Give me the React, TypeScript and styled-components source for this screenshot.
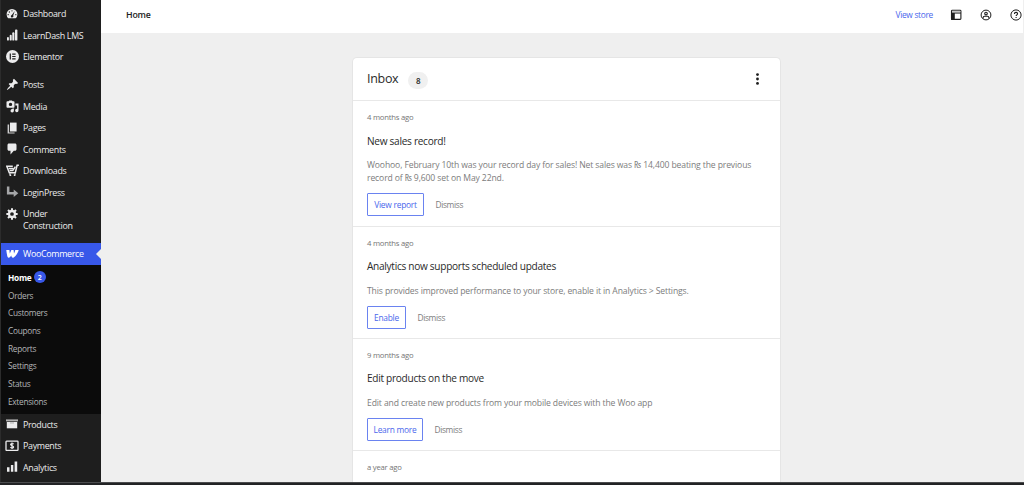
import React from 'react';
import styled, { createGlobalStyle } from 'styled-components';

const GlobalStyle = createGlobalStyle`
  *, *::before, *::after { box-sizing: border-box; }
  html, body { margin: 0; padding: 0; }
  body {
    font-family: "Open Sans", "Noto Sans", sans-serif;
    background: #efefef;
    overflow: hidden;
  }
  button, a { font-family: inherit; text-decoration: none; }
`;

const Page = styled.div`
  display: flex;
  flex-direction: column;
  height: 485px;
  width: 1024px;
  overflow: hidden;
`;

const Body = styled.div`
  flex: 1;
  min-height: 0;
  display: flex;
`;

const BottomEdge = styled.div`
  flex: none;
  height: 3px;
  background: #222325;
  border-top: 1px solid #4b4c4e;
`;

const Sidebar = styled.nav`
  flex: none;
  width: 101px;
  background: #1e1e1e;
  border-left: 1px solid #2c2c2c;
  padding-top: 3px;
  overflow: hidden;
`;

const MenuGroup = styled.div<{ $gap?: number }>`
  margin-bottom: ${(p) => p.$gap ?? 0}px;
`;

const MenuItem = styled.a<{ $active?: boolean; $tall?: boolean }>`
  position: relative;
  display: flex;
  align-items: flex-start;
  height: ${(p) => (p.$tall ? 33 : 21.55)}px;
  padding: 5px 0 0 4px;
  background: ${(p) => (p.$active ? '#3858e9' : 'transparent')};
  color: ${(p) => (p.$active ? '#fff' : '#ececed')};
`;

const MenuIcon = styled.span`
  flex: none;
  width: 14px;
  height: 12px;
  margin: -0.4px 4px 0 0;
  display: flex;
  align-items: center;
  justify-content: center;
  svg { display: block; flex: none; }
`;

const MenuLabel = styled.span`
  font-size: 8.9px;
  line-height: 11.5px;
  letter-spacing: -0.31px;
  white-space: pre-line;
`;

const ActiveArrow = styled.span`
  position: absolute;
  right: 0;
  top: 6px;
  border: 5px solid transparent;
  border-right-color: #efefef;
  border-left-width: 0;
`;

const SubMenu = styled.div`
  background: #0b0b0b;
  height: 149px;
  padding: 4px 0 0 7px;
`;

const SubItem = styled.a<{ $current?: boolean }>`
  display: flex;
  align-items: center;
  height: 17.7px;
  font-size: 8.3px;
  letter-spacing: -0.29px;
  font-weight: ${(p) => (p.$current ? 700 : 400)};
  color: ${(p) => (p.$current ? '#fff' : '#b4b5b7')};
`;

const Count = styled.span`
  width: 12px;
  height: 12px;
  margin-left: 2.2px;
  border-radius: 50%;
  background: #3858e9;
  color: #fff;
  font-size: 7px;
  font-weight: 600;
  display: flex;
  align-items: center;
  justify-content: center;
`;

const Main = styled.main`
  flex: 1;
  min-width: 0;
  display: flex;
  flex-direction: column;
`;

const TopBar = styled.header`
  flex: none;
  display: flex;
  align-items: center;
  height: 33px;
  margin-right: 1px;
  padding: 0 1px 4px 25px;
  background: #fff;
`;

const PageTitle = styled.h1`
  margin: 0;
  flex: 1;
  font-size: 8.8px;
  letter-spacing: -0.2px;
  font-weight: 600;
  color: #1e1e1e;
`;

const StoreLink = styled.a`
  font-size: 8.4px;
  letter-spacing: -0.31px;
  color: #4a67ec;
  margin-right: 17px;
`;

const TopIcons = styled.div`
  display: flex;
  align-items: center;
  gap: 18px;
  svg { display: block; }
`;

const Content = styled.div`
  flex: 1;
  min-height: 0;
  display: flex;
  justify-content: flex-start;
  padding: 24px 0 0 251px;
`;

const Card = styled.section`
  width: 429px;
  height: 460px;
  background: #fff;
  border: 1px solid #e5e5e5;
  border-bottom: 0;
  border-radius: 5px 5px 0 0;
`;

const CardHeader = styled.header`
  display: flex;
  align-items: center;
  height: 43px;
  padding: 0 17px 0 14px;
  border-bottom: 1px solid #e8e8e8;
`;

const CardTitle = styled.h2`
  margin: -1px 0 0;
  font-size: 12.5px;
  letter-spacing: -0.3px;
  font-weight: 400;
  color: #2a2a2a;
`;

const Badge = styled.span`
  width: 20px;
  height: 17px;
  margin: 2px auto 0 10px;
  border-radius: 9px;
  background: #f0f0f0;
  color: #1e1e1e;
  font-size: 8px;
  font-weight: 600;
  display: flex;
  align-items: center;
  justify-content: center;
`;

const Note = styled.article<{ $height: number }>`
  height: ${(p) => p.$height}px;
  padding: 9.4px 14px 0;
  border-bottom: 1px solid #e8e8e8;
`;

const NoteDate = styled.div`
  font-size: 7.7px;
  line-height: 14px;
  letter-spacing: -0.22px;
  color: #757575;
`;

const NoteTitle = styled.h3`
  margin: 8.2px 0 10.5px;
  font-size: 10.1px;
  line-height: 16px;
  font-weight: 400;
  letter-spacing: -0.29px;
  color: #2a2a2a;
`;

const NoteText = styled.p`
  margin: 0 0 8px;
  font-size: 8.6px;
  line-height: 13px;
  letter-spacing: -0.12px;
  color: #7c7c7c;
  white-space: pre-line;
`;

const Actions = styled.div`
  display: flex;
  align-items: center;
  gap: 11.5px;
`;

const PrimaryAction = styled.button<{ $width: number }>`
  width: ${(p) => p.$width}px;
  height: 23px;
  padding: 0;
  background: #fff;
  border: 1px solid #6a83f0;
  border-radius: 1px;
  color: #4a67ec;
  font-size: 8.4px;
  letter-spacing: -0.24px;
`;

const DismissAction = styled.button`
  padding: 0;
  border: 0;
  background: none;
  color: #7c7c7c;
  font-size: 8.4px;
  letter-spacing: -0.36px;
`;

const icons: Record<string, React.ReactNode> = {
  dashboard: (
    <svg width="12" height="12" viewBox="0 0 20 20" fill="currentColor">
      <path fillRule="evenodd" d="M3.8 17h12.4A9 9 0 1 0 3.8 17zM10 3.6a1.100 1.100 0 1 1 0 2.200 1.100 1.100 0 0 1 0-2.200zM5.600 5.600a1.100 1.100 0 1 1 0 2.200 1.100 1.100 0 0 1 0-2.200zM3.600 10a1.100 1.100 0 1 1 0 2.200 1.100 1.100 0 0 1 0-2.200zM16.400 10a1.100 1.100 0 1 1 0 2.200 1.100 1.100 0 0 1 0-2.200zM14.600 5.200 12 12.600a2.100 2.100 0 1 1-2.300-.9z" />
    </svg>
  ),
  bars: (
    <svg width="12" height="12" viewBox="0 0 12 12" fill="currentColor">
      <rect x="1" y="8" width="1.9" height="3.6" rx=".9" />
      <rect x="3.7" y="5.8" width="2" height="5.8" rx=".9" />
      <rect x="6.3" y="3.3" width="2.100" height="8.3" rx=".9" />
      <rect x="9" y=".6" width="2.4" height="11" rx=".9" />
    </svg>
  ),
  elementor: (
    <svg width="13" height="13" viewBox="0 0 13 13">
      <circle cx="6.5" cy="6.5" r="6.5" fill="currentColor" />
      <path d="M4.300 3.600v5.800M6.200 4.200h3.400M6.200 6.500h3.400M6.200 8.800h3.400" stroke="#1e1e1e" strokeWidth="1.200" />
    </svg>
  ),
  pin: (
    <svg width="13" height="13" viewBox="0 0 20 20" fill="currentColor">
      <path d="M10.440 3.020l1.820-1.820 6.360 6.350-1.830 1.820c-1.050-.68-2.480-.57-3.410.36l-.75.750c-.92.930-1.040 2.350-.35 3.410l-1.830 1.820-2.410-2.410-2.800 2.790c-.42.420-3.380 2.710-3.800 2.290s1.860-3.390 2.280-3.810l2.790-2.790L4.100 9.360l1.830-1.820c1.050.69 2.480.57 3.400-.36l.75-.75c.93-.92 1.050-2.350.36-3.410z" />
    </svg>
  ),
  media: (
    <svg width="13" height="13" viewBox="0 0 13 13" fill="currentColor">
      <path fillRule="evenodd" d="M1.300 1.300h1.200L3.300.4h2.600l.8.900h1c.5 0 .8.300.8.800v4.800c0 .5-.3.800-.8.800H1.300c-.5 0-.8-.3-.8-.8V2.100c0-.5.300-.8.8-.8zM4.500 2.700a1.700 1.700 0 1 0 0 3.400 1.700 1.700 0 0 0 0-3.400z" />
      <path d="M9.400 3.600h3.100v7a1.700 1.700 0 1 1-1.400-1.700V5.500H9.400zM6.400 8.400h1.500v2.400a1.700 1.700 0 1 1-1.500-1.700z" />
    </svg>
  ),
  pages: (
    <svg width="12" height="12" viewBox="0 0 12 12" fill="currentColor">
      <path d="M4 .6h6.600v8.900H4z" />
      <path d="M1.600 2.400h1.500v8h5.500v1.200h-7z" opacity=".85" />
    </svg>
  ),
  comment: (
    <svg width="12" height="12" viewBox="0 0 20 20" fill="currentColor">
      <path d="M5 1h10c1.500 0 2.500 1 2.500 2.500v7c0 1.500-1 2.500-2.500 2.500h-2l-5.500 6V13H5c-1.500 0-2.500-1-2.500-2.500v-7C2.500 2 3.500 1 5 1z" />
    </svg>
  ),
  cart: (
    <svg width="13" height="13" viewBox="0 0 13 13" fill="none" stroke="currentColor">
      <path d="M12.900 1.200h-1.800L9.300 8.700H3.300L.8 2.300h6" strokeWidth="1.500" />
      <path d="M2.600 4.400h4.600M3.600 6.600h3.200L9.400 2.700" strokeWidth="1.500" />
      <circle cx="4.400" cy="11.200" r=".9" fill="currentColor" stroke="none" />
      <circle cx="8.600" cy="11.200" r=".9" fill="currentColor" stroke="none" />
      <path d="M3.900 8.700v2.500M9 8.700v2.500" strokeWidth=".9" />
    </svg>
  ),
  loginpress: (
    <svg width="13" height="12" viewBox="0 0 13 12" fill="#a5a6a8">
      <path d="M.9.600h2.500v5.300h4.300V3.400L12.300 7.200 7.700 11V8.500H.9z" />
    </svg>
  ),
  gear: (
    <svg width="12" height="12" viewBox="0 0 20 20" fill="none" stroke="currentColor">
      <circle cx="10" cy="10" r="5" strokeWidth="3.800" />
      <path d="M10 .6v3.600M10 15.800v3.600M.6 10h3.600M15.800 10h3.600M3.350 3.350l2.500 2.500M14.150 14.150l2.500 2.500M3.350 16.650l2.500-2.500M14.150 5.850l2.500-2.500" strokeWidth="3.400" />
    </svg>
  ),
  woo: (
    <svg width="13" height="12" viewBox="0 0 13 12" fill="currentColor">
      <path d="M.3 2h3.100l.4 3.500L5.400 2h2.200l.4 3.400C8.600 4.300 9 3.200 9.300 2h3.400C11.800 5.200 10 7.900 7.700 9.400c-1.100.6-1.900.2-2.200-.8l-.2-1L4.100 9c-1 1.100-2.100 1-2.600-.3C.9 6.700.5 4.400.3 2z" />
    </svg>
  ),
  products: (
    <svg width="12" height="12" viewBox="0 0 12 12" fill="currentColor">
      <path d="M0 1.400h12v2H0z" opacity=".7" />
      <path d="M.8 4h10.400v6.300H.8z" />
      <path d="M4 4.500h4v.9H4z" fill="#aaa" />
    </svg>
  ),
  payments: (
    <svg width="14" height="12" viewBox="0 0 14 12" fill="none" stroke="currentColor">
      <rect x="1" y="1.200" width="12" height="9.200" rx=".6" strokeWidth="1.300" />
      <path d="M8.700 3.900c-.7-.5-3.100-.7-3.100.7 0 1.500 3 .8 3 2.300 0 1.300-2.400 1.200-3.300.5M7 2.500v6.400" strokeWidth="1.200" />
    </svg>
  ),
  analytics: (
    <svg width="12" height="12" viewBox="0 0 12 12" fill="currentColor">
      <path d="M1 6.300h2.500v4.400H1zM4.900 4h2.400v6.700H4.900zM8.600.5h2.600v10.200H8.600z" />
    </svg>
  ),
};

type Entry = { label: string; icon: string; tall?: boolean; active?: boolean };

const groupA: Entry[] = [
  { label: 'Dashboard', icon: 'dashboard' },
  { label: 'LearnDash LMS', icon: 'bars' },
  { label: 'Elementor', icon: 'elementor' },
];
const groupB: Entry[] = [
  { label: 'Posts', icon: 'pin' },
  { label: 'Media', icon: 'media' },
  { label: 'Pages', icon: 'pages' },
  { label: 'Comments', icon: 'comment' },
  { label: 'Downloads', icon: 'cart' },
  { label: 'LoginPress', icon: 'loginpress' },
  { label: 'Under\nConstruction', icon: 'gear', tall: true },
];
const groupC: Entry[] = [
  { label: 'Products', icon: 'products' },
  { label: 'Payments', icon: 'payments' },
  { label: 'Analytics', icon: 'analytics' },
];
const subItems = ['Orders', 'Customers', 'Coupons', 'Reports', 'Settings', 'Status', 'Extensions'];

function Menu({ items, gap }: { items: Entry[]; gap?: number }) {
  return (
    <MenuGroup $gap={gap}>
      {items.map((it) => (
        <MenuItem key={it.label} $tall={it.tall} $active={it.active}>
          <MenuIcon>{icons[it.icon]}</MenuIcon>
          <MenuLabel>{it.label}</MenuLabel>
          {it.active && <ActiveArrow />}
        </MenuItem>
      ))}
    </MenuGroup>
  );
}

const notes = [
  {
    date: '4 months ago',
    title: 'New sales record!',
    text: 'Woohoo, February 10th was your record day for sales! Net sales was ₨ 14,400 beating the previous\nrecord of ₨ 9,600 set on May 22nd.',
    action: 'View report',
    width: 57,
    height: 125.5,
  },
  {
    date: '4 months ago',
    title: 'Analytics now supports scheduled updates',
    text: 'This provides improved performance to your store, enable it in Analytics > Settings.',
    action: 'Enable',
    width: 39,
    height: 112.3,
  },
  {
    date: '9 months ago',
    title: 'Edit products on the move',
    text: 'Edit and create new products from your mobile devices with the Woo app',
    action: 'Learn more',
    width: 56,
    height: 112.2,
  },
];

export default function App() {
  return (
    <Page>
      <GlobalStyle />
      <Body>
        <Sidebar>
          <Menu items={groupA} gap={6.4} />
          <Menu items={groupB} gap={6.7} />
          <Menu items={[{ label: 'WooCommerce', icon: 'woo', active: true }]} />
          <SubMenu>
            <SubItem $current>
              Home <Count>2</Count>
            </SubItem>
            {subItems.map((s) => (
              <SubItem key={s}>{s}</SubItem>
            ))}
          </SubMenu>
          <Menu items={groupC} />
        </Sidebar>
        <Main>
          <TopBar>
            <PageTitle>Home</PageTitle>
            <StoreLink>View store</StoreLink>
            <TopIcons>
              <svg width="12" height="12" viewBox="0 0 12 12">
                <rect x="1.5" y="1.2" width="9.4" height="9.2" rx=".8" fill="none" stroke="#1e1e1e" strokeWidth="1.1" />
                <path d="M1.500 4h9.400" stroke="#1e1e1e" strokeWidth="1.100" />
                <path d="M1 4h3.800v6.900H1z" fill="#1e1e1e" />
                <path d="M2 1.900h8.400v1.300H2z" fill="#c4c4c4" />
              </svg>
              <svg width="12" height="12" viewBox="0 0 12 12" fill="none" stroke="#1e1e1e">
                <circle cx="6" cy="6" r="4.9" />
                <circle cx="6" cy="4.6" r="1.3" strokeWidth="1.1" />
                <path d="M3.100 9.400V8.800c0-1 .7-1.500 1.500-1.500h2.800c.8 0 1.500.5 1.500 1.500v.6" strokeWidth="1.100" />
              </svg>
              <svg width="12" height="12" viewBox="0 0 12 12" fill="none" stroke="#1e1e1e">
                <circle cx="6" cy="6" r="5.1" />
                <path d="M4.400 4.900c0-2.100 3.200-2 3.200-.1 0 1.100-1.500 1.100-1.500 2.300M6.100 7.900v1" strokeWidth="1.100" />
              </svg>
            </TopIcons>
          </TopBar>
          <Content>
            <Card>
              <CardHeader>
                <CardTitle>Inbox</CardTitle>
                <Badge>8</Badge>
                <svg width="10" height="14" viewBox="0 0 10 14" fill="#1e1e1e">
                  <circle cx="4.5" cy="2.6" r="1.4" />
                  <circle cx="4.5" cy="7" r="1.4" />
                  <circle cx="4.5" cy="11.4" r="1.4" />
                </svg>
              </CardHeader>
              {notes.map((n) => (
                <Note key={n.title} $height={n.height}>
                  <NoteDate>{n.date}</NoteDate>
                  <NoteTitle>{n.title}</NoteTitle>
                  <NoteText>{n.text}</NoteText>
                  <Actions>
                    <PrimaryAction $width={n.width}>{n.action}</PrimaryAction>
                    <DismissAction>Dismiss</DismissAction>
                  </Actions>
                </Note>
              ))}
              <Note $height={100}>
                <NoteDate>a year ago</NoteDate>
              </Note>
            </Card>
          </Content>
        </Main>
      </Body>
      <BottomEdge />
    </Page>
  );
}
